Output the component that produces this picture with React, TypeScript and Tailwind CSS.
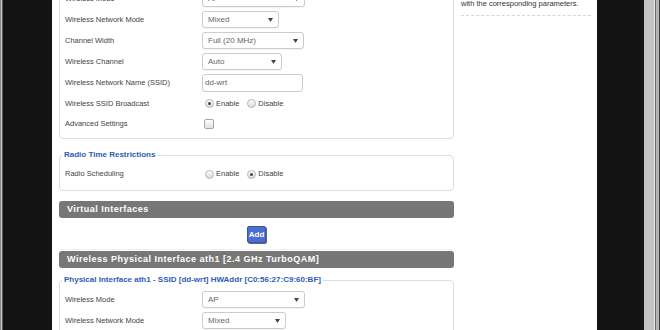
import React from "react";

const font = { fontFamily: '"Liberation Sans", Arial, sans-serif' };

const Arrow = () => (
    <svg width="5" height="4" viewBox="0 0 5 4" className="shrink-0">
        <path d="M0 0 L5 0 L2.5 4 Z" fill="#444" />
    </svg>
);

const Select = ({ value, width }: { value: string; width: string }) => (
    <div
        className={`${width} h-[17px] flex items-center justify-between pl-[5px] pr-[5px] border border-[#ccc] rounded-[3px] bg-white text-[8px] text-[#666] shadow-[0_1px_1px_rgba(0,0,0,0.05)]`}
    >
        <span>{value}</span>
        <Arrow />
    </div>
);

const Radio = ({ checked, label }: { checked?: boolean; label: string }) => (
    <div className="flex items-center">
        <span className="w-[9px] h-[9px] rounded-full border border-[#b5b5b5] bg-gradient-to-b from-[#fff] to-[#dcdcdc] flex items-center justify-center">
            {checked && <span className="w-[3px] h-[3px] rounded-full bg-[#444]" />}
        </span>
        <span className="ml-[2px] text-[7.5px] text-[#444]">{label}</span>
    </div>
);

const Row = ({ label, children, h = "h-[21px]" }: { label: string; children: React.ReactNode; h?: string }) => (
    <div className={`flex items-center ${h}`}>
        <div className="w-[137px] text-[7.5px] text-[#444]">{label}</div>
        {children}
    </div>
);

const Legend = ({ text }: { text: string }) => (
    <legend className="ml-[-3px] px-[2px] text-[8px] leading-[10px] font-bold text-[#2d5cb5]">{text}</legend>
);

const Bar = ({ text }: { text: string }) => (
    <div className="h-[17px] rounded-[3px] bg-[#777] flex items-center pl-[8px] text-[9px] font-bold text-white tracking-[0.5px]">
        {text}
    </div>
);

const Radios = ({ first }: { first: boolean }) => (
    <div className="flex items-center ml-[3px] gap-[8px]">
        <Radio checked={first} label="Enable" />
        <Radio checked={!first} label="Disable" />
    </div>
);

export default function App() {
    return (
        <div className="w-[660px] h-[330px] flex overflow-hidden bg-[#131313]" style={font}>
            <div className="w-px bg-[#8a8a8a]" />
            <div className="w-px bg-[#c8c8c8]" />
            <div className="w-px bg-[#5a5a5a]" />
            <div className="w-[49px] bg-[#131313]" />
            <div className="w-[545px] bg-white flex overflow-hidden">
                <div className="ml-[7px] w-[395px] flex flex-col">
                    <fieldset className="-mt-[20px] pt-[7px] pb-[5px] px-[5px] border border-[#ddd] rounded-[4px]">
                        <Row label="Wireless Mode">
                            <Select value="AP" width="w-[103px]" />
                        </Row>
                        <Row label="Wireless Network Mode">
                            <Select value="Mixed" width="w-[77px]" />
                        </Row>
                        <Row label="Channel Width">
                            <Select value="Full (20 MHz)" width="w-[102px]" />
                        </Row>
                        <Row label="Wireless Channel">
                            <Select value="Auto" width="w-[80px]" />
                        </Row>
                        <Row label="Wireless Network Name (SSID)">
                            <div className="w-[101px] h-[18px] flex items-center pl-[2px] border border-[#ccc] rounded-[3px] text-[8px] text-[#666]">
                                dd-wrt
                            </div>
                        </Row>
                        <Row label="Wireless SSID Broadcast">
                            <Radios first={true} />
                        </Row>
                        <Row label="Advanced Settings" h="h-[19px]">
                            <span className="ml-[2px] w-[10px] h-[10px] rounded-[2px] border border-[#a5a5a5] bg-gradient-to-b from-[#fff] to-[#e2e2e2]" />
                        </Row>
                    </fieldset>

                    <fieldset className="mt-[11px] pt-[4px] pb-[6px] px-[5px] border border-[#ddd] rounded-[4px]">
                        <Legend text="Radio Time Restrictions" />
                        <Row label="Radio Scheduling" h="h-[20px]">
                            <Radios first={false} />
                        </Row>
                    </fieldset>

                    <div className="mt-[10px]">
                        <Bar text="Virtual Interfaces" />
                    </div>

                    <button className="mt-[8px] self-center w-[19px] h-[17px] shrink-0 bg-[#4a6fd0] border border-[#3556ad] rounded-[2px] text-white text-[8px] font-bold shadow-[1px_1px_0_#666] flex items-center justify-center">
                        Add
                    </button>

                    <div className="mt-[6px] h-px shrink-0 bg-[#f0f0f0]" />

                    <div className="mt-[1px]">
                        <Bar text="Wireless Physical Interface ath1 [2.4 GHz TurboQAM]" />
                    </div>

                    <fieldset className="mt-[7px] pt-[4px] pb-[6px] px-[5px] border border-[#ddd] rounded-[4px]">
                        <Legend text="Physical Interface ath1 - SSID [dd-wrt] HWAddr [C0:56:27:C9:60:BF]" />
                        <Row label="Wireless Mode">
                            <Select value="AP" width="w-[103px]" />
                        </Row>
                        <Row label="Wireless Network Mode">
                            <Select value="Mixed" width="w-[84px]" />
                        </Row>
                    </fieldset>
                </div>

                <div className="ml-[7px] w-[130px] flex flex-col">
                    <p className="-mt-[1px] leading-[10px] text-[7.5px] text-[#333]">with the corresponding parameters.</p>
                    <div className="mt-[6px] border-t border-dashed border-[#d5d5d5]" />
                </div>
            </div>
            <div className="w-[47px] bg-[#131313]" />
            <div className="w-[10px] bg-[#c4c4c4]" />
            <div className="w-px bg-[#e8e8e8]" />
            <div className="w-px bg-[#6a6a6a]" />
            <div className="w-[3px] bg-[#b5b5b5]" />
            <div className="w-px bg-[#3a3a3a]" />
        </div>
    );
}
